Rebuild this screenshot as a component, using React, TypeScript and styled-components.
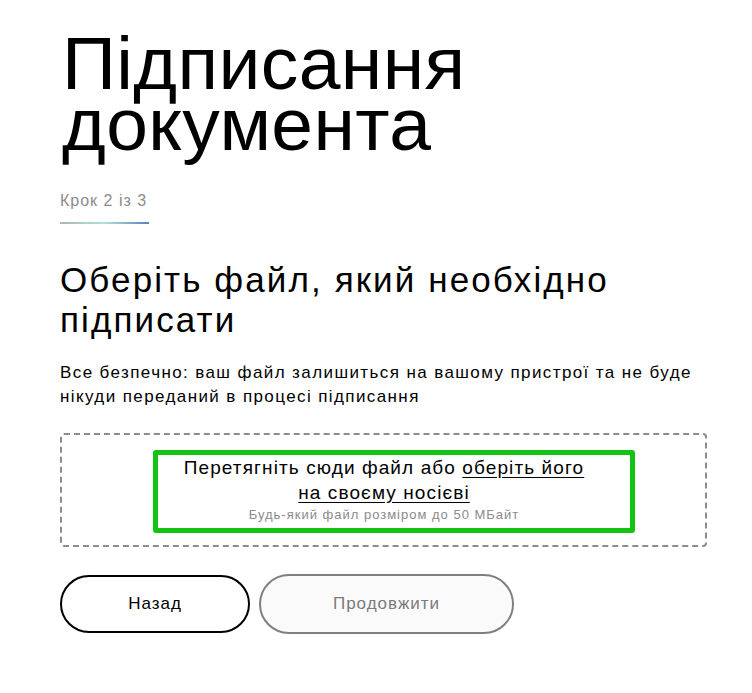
import React from 'react'
import styled, { createGlobalStyle } from 'styled-components'

const GlobalStyle = createGlobalStyle`
  html, body {
    margin: 0;
    padding: 0;
    background: #ffffff;
  }
  body {
    font-family: "Liberation Sans", Arial, sans-serif;
    color: #000000;
  }
`

const Page = styled.main`
  width: 647px;
  padding: 33px 45px 40px 60px;
`

const Title = styled.h1`
  margin: 0 0 0 2px;
  font-size: 75px;
  line-height: 61px;
  font-weight: 400;
  letter-spacing: 0.4px;
`

const TitleLine = styled.span`
  display: block;
`

const Step = styled.div`
  margin-top: 37px;
  width: 89px;
  padding-bottom: 12px;
  font-size: 16px;
  letter-spacing: 1px;
  color: #8c8c8c;
  white-space: nowrap;
  border-bottom: 2px solid transparent;
  border-image: linear-gradient(90deg, #b4b4b4 0%, #a9e4d4 50%, #5a7fc4 100%) 1;
`

const Subtitle = styled.h2`
  margin: 36px 0 0;
  font-size: 35px;
  line-height: 40px;
  font-weight: 400;
  letter-spacing: 2.1px;
`

const Note = styled.p`
  margin: 21px 0 0;
  font-size: 17px;
  line-height: 24px;
  letter-spacing: 1.4px;
`

const DropZone = styled.div`
  margin-top: 24px;
  height: 114px;
  border: 2px dashed #8c8c8c;
  border-radius: 4px;
  display: flex;
  align-items: flex-start;
  justify-content: center;
  padding: 15px 0 0 21px;
  box-sizing: border-box;
`

const DropLabel = styled.label`
  width: 482px;
  height: 83px;
  box-sizing: border-box;
  border: 5px solid #13c313;
  border-radius: 3px;
  display: flex;
  flex-direction: column;
  align-items: center;
  padding: 0 20px 0 0;
  cursor: pointer;
`

const DropText = styled.div`
  font-size: 19px;
  line-height: 25px;
  letter-spacing: 1.1px;
  text-align: center;
  width: 420px;
`

const PickLink = styled.span`
  text-decoration: underline;
  text-underline-offset: 3px;
`

const Hint = styled.div`
  margin-top: 2px;
  font-size: 13px;
  letter-spacing: 1px;
  color: #8a8a8a;
`

const Actions = styled.div`
  margin-top: 27px;
  display: flex;
  gap: 9px;
  align-items: center;
`

const Button = styled.button<{ $disabled?: boolean }>`
  height: ${p => (p.$disabled ? '60px' : '58px')};
  width: ${p => (p.$disabled ? '255px' : '190px')};
  border-radius: 30px;
  border: 2px solid ${p => (p.$disabled ? '#7f7f7f' : '#000000')};
  background: ${p => (p.$disabled ? '#fafafa' : '#ffffff')};
  color: ${p => (p.$disabled ? '#7a7a7a' : '#000000')};
  font-family: "Liberation Sans", Arial, sans-serif;
  font-size: 17px;
  letter-spacing: 1px;
  cursor: ${p => (p.$disabled ? 'default' : 'pointer')};
`

export default function App() {
  return (
    <>
      <GlobalStyle />
      <Page>
        <Title>
          <TitleLine>Підписання</TitleLine>
          <TitleLine>документа</TitleLine>
        </Title>
        <Step>Крок 2 із 3</Step>
        <Subtitle>Оберіть файл, який необхідно підписати</Subtitle>
        <Note>
          Все безпечно: ваш файл залишиться на вашому пристрої та не буде нікуди переданий в процесі
          підписання
        </Note>
        <DropZone>
          <DropLabel>
            <DropText>
              Перетягніть сюди файл або <PickLink>оберіть його на своєму носієві</PickLink>
            </DropText>
            <Hint>Будь-який файл розміром до 50 МБайт</Hint>
          </DropLabel>
        </DropZone>
        <Actions>
          <Button>Назад</Button>
          <Button $disabled disabled>
            Продовжити
          </Button>
        </Actions>
      </Page>
    </>
  )
}
